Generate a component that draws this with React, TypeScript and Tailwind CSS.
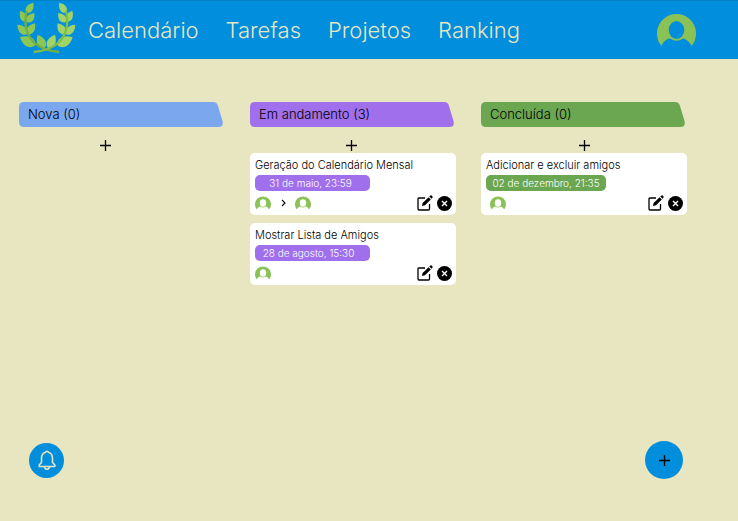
import React from 'react';

type Task = {
  title: string;
  due: string;
  people: number;
  inset?: boolean;
  pill: string;
};

type Column = {
  name: string;
  color: string;
  addAlign: string;
  tasks: Task[];
};

const columns: Column[] = [
  { name: 'Nova (0)', color: '#7aa7ee', addAlign: 'pr-[33px]', tasks: [] },
  {
    name: 'Em andamento (3)',
    color: '#9f6fec',
    addAlign: 'pr-[3px]',
    tasks: [
      { title: 'Geração do Calendário Mensal', due: '31 de maio, 23:59', people: 2, pill: 'w-[115px] pr-1 bg-[#9f6fec]' },
      { title: 'Mostrar Lista de Amigos', due: '28 de agosto, 15:30', people: 1, pill: 'w-[115px] pr-2 bg-[#9f6fec]' },
    ],
  },
  {
    name: 'Concluída (0)',
    color: '#6ba651',
    addAlign: 'pr-0',
    tasks: [
      { title: 'Adicionar e excluir amigos', due: '02 de dezembro, 21:35', people: 1, inset: true, pill: 'w-[120px] bg-[#6ba651]' },
    ],
  },
];

const links = ['Calendário', 'Tarefas', 'Projetos', 'Ranking'];

// Each leaf: base x, base y, tip x, tip y, half width
const leaves = [
  [50, 38, 70, 8, 13],
  [48, 65, 31, 32, 13],
  [52, 67, 73, 39, 13],
  [51, 103, 22, 74, 14],
  [53, 103, 75, 70, 14],
  [76, 136, 30, 112, 19],
  [103, 145, 83, 104, 16],
];

function leafPath([bx, by, tx, ty, w]: number[]) {
  const dx = tx - bx;
  const dy = ty - by;
  const len = Math.hypot(dx, dy);
  const nx = (-dy / len) * w;
  const ny = (dx / len) * w;
  const p = (t: number, s: number) => `${bx + dx * t + nx * s} ${by + dy * t + ny * s}`;
  return `M${bx} ${by}C${p(0.15, 1)} ${p(0.6, 1.1)} ${tx} ${ty}C${p(0.6, -1.1)} ${p(0.15, -1)} ${bx} ${by}Z`;
}

function Branch({ leaf, stem }: { leaf: string; stem: string }) {
  return (
    <>
      {leaves.map((l) => (
        <path key={l.join()} d={leafPath(l)} fill={leaf} />
      ))}
      <path d="M50 32C42 68 48 105 75 130C95 147 120 153 147 156" fill="none" stroke={stem} strokeWidth="7" />
    </>
  );
}

function Laurel() {
  return (
    <svg viewBox="0 0 225 180" className="h-[60px] w-[75px] shrink-0" role="img" aria-label="Louros">
      <Branch leaf="#8cc756" stem="#71ae43" />
      <g transform="translate(218 0) scale(-1 1)">
        <Branch leaf="#a0d468" stem="#82bd4c" />
      </g>
    </svg>
  );
}

function Avatar({ className, bg }: { className: string; bg: string }) {
  return (
    <svg viewBox="0 0 39 32" className={className} aria-hidden="true">
      <path d="M4.500 32A19.500 19.500 0 1 1 34.500 32C33 28 29 25 26 24.500Q19.500 29 13 24.500C9 25 6 28 4.500 32Z" fill="#8bc255" />
      <ellipse cx="19.500" cy="16" rx="7.800" ry="9" fill={bg} />
    </svg>
  );
}

function Plus({ className }: { className: string }) {
  return (
    <svg viewBox="0 0 11 11" className={className} aria-hidden="true">
      <path d="M5.500 0V11M0 5.500H11" stroke="#000" strokeWidth="1.300" />
    </svg>
  );
}

function EditIcon() {
  return (
    <svg viewBox="0 0 16 16" className="size-4" fill="none" aria-hidden="true">
      <path d="M8 3H1.800Q1 3 1 3.800V14Q1 15 2 15H11.500Q12.500 15 12.500 14V9" stroke="#000" strokeWidth="1.300" />
      <path d="M5 11L5.600 8L11.600 2.200L13.800 4.400L8 10.300Z" fill="#000" />
      <path d="M12.300 1.500L13.500.4Q14 0 14.600.5L15.500 1.400Q16 2 15.500 2.500L14.500 3.700Z" fill="#000" />
    </svg>
  );
}

function CloseIcon() {
  return (
    <svg viewBox="0 0 15 15" className="size-[15px]" aria-hidden="true">
      <circle cx="7.500" cy="7.500" r="7.500" fill="#000" />
      <path d="M5 5L10 10M10 5L5 10" stroke="#fff" strokeWidth="1.400" />
    </svg>
  );
}

function Card({ task }: { task: Task }) {
  return (
    <article className="h-[62px] rounded-[5px] bg-white px-[5px] pt-1">
      <h3 className="text-[11px] leading-4 font-light whitespace-nowrap">{task.title}</h3>
      <p className={`mt-[2px] flex h-4 items-center justify-center rounded-[5px] text-[10px] leading-4 font-light whitespace-nowrap text-white ${task.pill}`}>
        {task.due}
      </p>
      <div className="mt-1 flex items-start justify-between">
        <div className={`flex items-center gap-2 pt-px ${task.inset ? 'pl-1' : ''}`}>
          <Avatar className="h-[14px] w-4" bg="#fff" />
          {task.people > 1 && (
            <>
              <svg viewBox="0 0 8 8" className="size-2" fill="none" aria-label="para">
                <path d="M3 1L6 4L3 7" stroke="#000" strokeWidth="1.100" />
              </svg>
              <Avatar className="h-[14px] w-4" bg="#fff" />
            </>
          )}
        </div>
        <div className="-mr-1 flex items-center gap-1 pr-[3px]">
          <button type="button" aria-label="Editar"><EditIcon /></button>
          <button type="button" aria-label="Excluir"><CloseIcon /></button>
        </div>
      </div>
    </article>
  );
}

export default function App() {
  return (
    <div className="flex min-h-screen flex-col bg-[#e8e5c1] font-['Inter',sans-serif] text-black">
      <header className="flex h-[59px] items-center border-t border-[#0480c4] bg-[#008edd] pr-[42px] pl-[10px]">
        <Laurel />
        <nav className="ml-[3px] flex flex-1 items-center gap-[27px] text-[22px] leading-8 font-light text-[#e8e5c1]">
          {links.map((l) => (
            <a key={l} href="#">{l}</a>
          ))}
        </nav>
        <button type="button" aria-label="Perfil">
          <Avatar className="h-8 w-[39px]" bg="#008edd" />
        </button>
      </header>

      <main className="grid flex-1 grid-cols-3 items-start gap-[25px] pt-[43px] pr-[51px] pl-[19px]">
        {columns.map((c) => (
          <section key={c.name}>
            <div className="relative mr-[2px] h-[25px]">
              <svg viewBox="0 0 204 25" preserveAspectRatio="none" className="absolute inset-0 size-full" aria-hidden="true">
                <path d="M5 0H194Q198 0 199 4L203.500 19Q205 25 199 25H5Q0 25 0 20V5Q0 0 5 0Z" fill={c.color} />
              </svg>
              <h2 className="relative pl-[9px] text-[13px] leading-[25px] font-light">{c.name}</h2>
            </div>
            <div className={`flex h-[26px] items-end justify-center pb-[2px] ${c.addAlign}`}>
              <button type="button" aria-label="Adicionar"><Plus className="size-[11px]" /></button>
            </div>
            <div className="flex flex-col gap-2">
              {c.tasks.map((t) => (
                <Card key={t.title} task={t} />
              ))}
            </div>
          </section>
        ))}
      </main>

      <footer className="flex items-center justify-between pr-[55px] pb-[42px] pl-[29px]">
        <button type="button" aria-label="Notificações" className="flex size-[35px] items-center justify-center rounded-full bg-[#008edd]">
          <svg viewBox="0 0 18 20" className="h-5 w-[18px]" fill="none" stroke="#e8e5c1" strokeWidth="1.600" strokeLinejoin="round" aria-hidden="true">
            <path d="M9 1.200Q10.200 1.200 10.500 2.200C13.500 3 14.500 5.500 14.500 8.500V12.500L16.800 15V16.500H1.200V15L3.500 12.500V8.500C3.500 5.500 4.500 3 7.500 2.200Q7.800 1.200 9 1.200Z" />
            <path d="M6.300 16.700Q7 19.200 9 19.200T11.700 16.700" />
          </svg>
        </button>
        <button type="button" aria-label="Nova tarefa" className="flex size-[38px] items-center justify-center rounded-full bg-[#008edd]">
          <Plus className="size-[11px]" />
        </button>
      </footer>
    </div>
  );
}
